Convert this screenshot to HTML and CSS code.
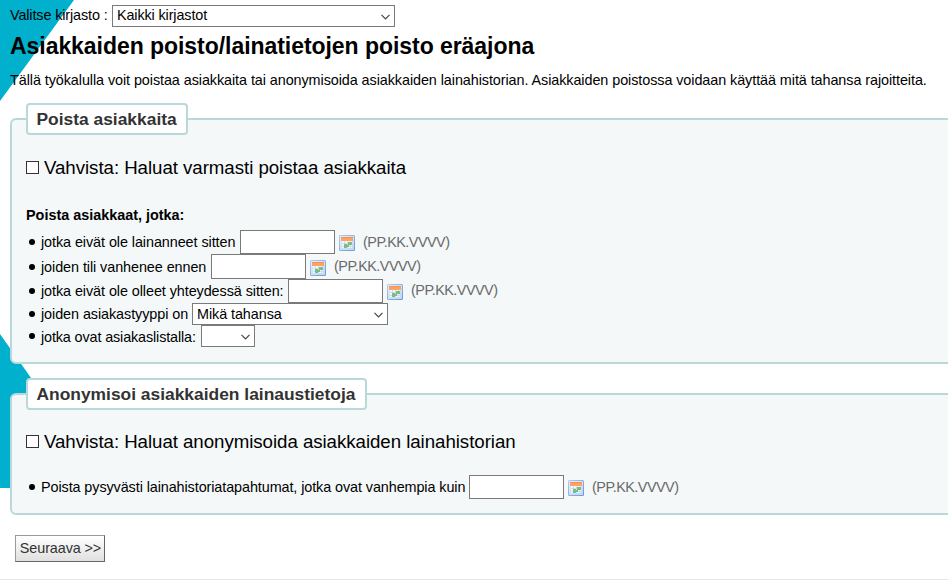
FILE: index.html
```html
<!DOCTYPE html>
<html lang="fi">
<head>
<meta charset="utf-8">
<title>Asiakkaiden poisto</title>
<link rel="stylesheet" href="styles.css">
</head>
<body>
<svg class="backdrop" viewBox="0 0 74 584" width="74" height="584" aria-hidden="true"><path fill="#00b0cc" d="M0 0H74L0 101ZM0 334L36 385V488H0Z"/></svg>
<svg class="defs" width="0" height="0" aria-hidden="true">
<defs>
<linearGradient id="calbg" x1="0" y1="0" x2="1" y2="1"><stop offset="0" stop-color="#e4effb"/><stop offset="1" stop-color="#bdd5f3"/></linearGradient>
<linearGradient id="calframe" x1="0" y1="0" x2="1" y2="1"><stop offset="0" stop-color="#adc9f1"/><stop offset="1" stop-color="#6e99d6"/></linearGradient>
</defs>
<symbol id="calendar" viewBox="0 0 16 16">
<rect x=".5" y=".5" width="15" height="15" rx=".5" fill="url(#calbg)" stroke="url(#calframe)"/>
<path fill="#f0f6fb" d="M3 6h10v7H3z"/>
<path fill="#ffa365" d="M2 2h12v4H2z"/><path fill="#ff8d48" d="M2 2h12v1H2z"/>
<path stroke="#c3d4e6" stroke-width=".7" d="M3 8.500h10M3 11.500h10M5.500 6v7M8.500 6v7M11.500 6v7"/>
<path fill="#7cbc80" d="M9 7h4v3H9zM5 9h3v4H5zM8 10h2v2H8z"/>
</symbol>
<symbol id="chevron" viewBox="0 0 9 6"><path fill="none" stroke="#444" stroke-width="1.200" d="M.5 .8L4.500 4.800L8.500 .8"/></symbol>
</svg>
<main>
<div class="library"><span class="w-lib">Valitse kirjasto :</span><div class="select lib-select"><span>Kaikki kirjastot</span><svg class="chev"><use href="#chevron"/></svg></div></div>
<h1>Asiakkaiden poisto/lainatietojen poisto eräajona</h1>
<p class="intro">Tällä työkalulla voit poistaa asiakkaita tai anonymisoida asiakkaiden lainahistorian. Asiakkaiden poistossa voidaan käyttää mitä tahansa rajoitteita.</p>
<section class="panel first">
<h2>Poista asiakkaita</h2>
<label class="confirm"><i class="check"></i><span>Vahvista: Haluat varmasti poistaa asiakkaita</span></label>
<h3>Poista asiakkaat, jotka:</h3>
<ul>
<li class="r1"><span class="text t1">jotka eivät ole lainanneet sitten</span><i class="input"></i><svg class="cal"><use href="#calendar"/></svg><span class="hint">(PP.KK.VVVV)</span></li>
<li class="r2"><span class="text t2">joiden tili vanhenee ennen</span><i class="input"></i><svg class="cal"><use href="#calendar"/></svg><span class="hint">(PP.KK.VVVV)</span></li>
<li class="r3"><span class="text t3">jotka eivät ole olleet yhteydessä sitten:</span><i class="input"></i><svg class="cal"><use href="#calendar"/></svg><span class="hint">(PP.KK.VVVV)</span></li>
<li class="r4"><span class="text t4">joiden asiakastyyppi on</span><div class="select type-select"><span>Mikä tahansa</span><svg class="chev"><use href="#chevron"/></svg></div></li>
<li class="r5"><span class="text t5">jotka ovat asiakaslistalla:</span><div class="select list-select"><span></span><svg class="chev"><use href="#chevron"/></svg></div></li>
</ul>
</section>
<section class="panel second">
<h2>Anonymisoi asiakkaiden lainaustietoja</h2>
<label class="confirm"><i class="check"></i><span>Vahvista: Haluat anonymisoida asiakkaiden lainahistorian</span></label>
<ul>
<li class="r1"><span class="text t6">Poista pysyvästi lainahistoriatapahtumat, jotka ovat vanhempia kuin</span><i class="input"></i><svg class="cal"><use href="#calendar"/></svg><span class="hint">(PP.KK.VVVV)</span></li>
</ul>
</section>
<button type="button">Seuraava &gt;&gt;</button>
</main>
<footer></footer>
</body>
</html>
```

FILE: styles.css
```css
* { box-sizing: border-box; }
body { margin: 0; height: 584px; overflow: hidden; background: #fff; color: #000; font-family: "Liberation Sans", Arial, sans-serif; font-size: 14.4px; letter-spacing: -.075px; white-space: nowrap; }
.backdrop { position: absolute; left: 0; top: 0; z-index: -1; }
.defs { position: absolute; }
main { padding: 5px 0 0 10px; height: 579px; }
.library { display: flex; height: 22px; line-height: 21px; letter-spacing: -.12px; }
.w-lib { width: 102px; }
.select { display: flex; align-items: center; justify-content: space-between; height: 22px; padding: 0 4px; border: 1px solid #7a7a7a; background: #fff; line-height: 20px; }
.chev { width: 9px; height: 6px; margin-top: 2px; }
.lib-select { width: 283px; }
.lib-select span { margin-top: -2px; }
h1 { margin: 4px 0 0; height: 30px; line-height: 30px; font-size: 23px; letter-spacing: -.05px; }
.intro { margin: 9px 0 0; height: 20px; line-height: 20px; }
.panel { width: 960px; border: 2px solid #b9d8d9; border-radius: 6px; background: #f4f8f9; padding-left: 14px; }
.first { height: 246px; margin-top: 28px; }
.second { height: 122px; margin-top: 29px; }
h2 { width: max-content; height: 32px; margin: -17px 0 0; padding: 0 8px 0 8.5px; border: 2px solid #b9d8d9; border-radius: 4px; background: #fff; color: #333; font-size: 17.400px; letter-spacing: 0; line-height: 28px; }
.first h2 { width: 162px; }
.second h2 { width: 341px; }
.confirm { display: flex; align-items: center; height: 25px; margin-top: 20px; font-size: 18.700px; line-height: 25px; letter-spacing: -.05px; }
.second .confirm { margin-top: 19px; }
.check { width: 13px; height: 13px; margin-right: 5px; border: 1px solid #333; background: #fff; }
h3 { margin: 25px 0 0; height: 20px; font-size: 14.4px; line-height: 20px; letter-spacing: 0; }
ul { list-style: none; margin: 5px 0 0; padding: 0; }
.second ul { margin-top: 21px; }
li { display: flex; align-items: center; height: 24px; }
li::before { content: ""; width: 6px; height: 6px; margin: 0 9px 0 3px; border-radius: 50%; background: #000; }
.text { margin-left: -3px; line-height: 20px; }
.r2 { height: 25px; }
.r4, .r5 { height: 22px; }
.r5 .text { margin-top: 1px; }
.input { width: 95px; height: 100%; border: 1px solid #7a7a7a; background: #fff; }
.cal { width: 16px; height: 16px; margin: 2px 8px 0 4px; }
.hint { color: #6a6a6a; letter-spacing: -.5px; }
.r2 .hint, .r3 .hint { margin-top: -2px; }
.t1 { width: 199px; }
.t2 { width: 170px; }
.t3 { width: 247px; }
.t4 { width: 151px; }
.t5 { width: 160px; letter-spacing: -.13px; }
.t6 { width: 428px; letter-spacing: -.09px; }
.type-select { width: 196px; }
.list-select { width: 54px; }
button { display: block; width: 90px; height: 27px; margin: 20px 0 0 5px; padding: 0 0 2px 1px; border: 1px solid; border-color: #999 #666 #666 #999; background: linear-gradient(#fff, #e0e0e0); color: #333; font: 14.4px "Liberation Sans", Arial, sans-serif; letter-spacing: -.1px; }
footer { height: 5px; border-top: 1px solid #e6e6e6; }
```
